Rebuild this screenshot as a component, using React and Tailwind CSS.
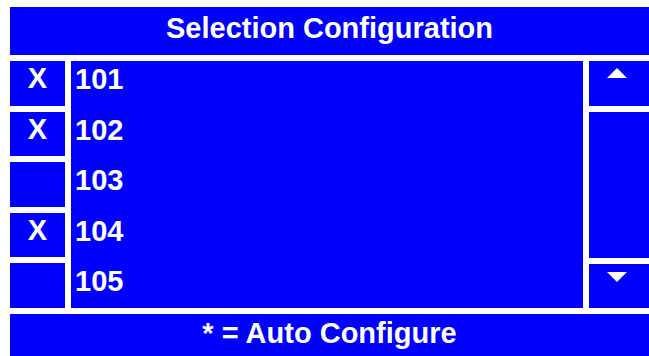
import React from "react";

const rows = [
  { id: "101", on: true },
  { id: "102", on: true },
  { id: "103", on: false },
  { id: "104", on: true },
  { id: "105", on: false },
];

function App() {
  return (
    <div
      className="w-[649px] h-[356px] bg-white pt-[7px] pl-[10px] flex flex-col gap-[6px] overflow-hidden text-white font-bold text-[29px] leading-none"
      style={{ fontFamily: '"Liberation Sans", Arial, sans-serif' }}
    >
      <div className="h-[48px] bg-[#0000ff] flex justify-center pt-[7px] shrink-0">
        Selection Configuration
      </div>

      <div className="h-[247px] flex gap-[6px] shrink-0">
        <div className="w-[55px] flex flex-col gap-[6px]">
          {rows.map((r) => (
            <div key={r.id} className="flex-1 bg-[#0000ff] flex justify-center pt-[3px]">
              {r.on ? "X" : ""}
            </div>
          ))}
        </div>

        <div className="w-[512px] bg-[#0000ff] flex flex-col gap-[6px]">
          {rows.map((r) => (
            <div key={r.id} className="flex-1 pl-[4px] pt-[4px]">
              {r.id}
            </div>
          ))}
        </div>

        <div className="flex-1 flex flex-col gap-[6px]">
          <div className="h-[45px] bg-[#0000ff] pl-[18px] pt-[7px]">
            <svg width="20" height="10" viewBox="0 0 20 10">
              <polygon points="10,0 20,10 0,10" fill="white" />
            </svg>
          </div>
          <div className="flex-1 bg-[#0000ff]" />
          <div className="h-[44px] bg-[#0000ff] pl-[18px] pt-[8px]">
            <svg width="20" height="10" viewBox="0 0 20 10">
              <polygon points="0,0 20,0 10,10" fill="white" />
            </svg>
          </div>
        </div>
      </div>

      <div className="flex-1 bg-[#0000ff] flex justify-center pt-[5px]">
        * = Auto Configure
      </div>
    </div>
  );
}

export default App;
